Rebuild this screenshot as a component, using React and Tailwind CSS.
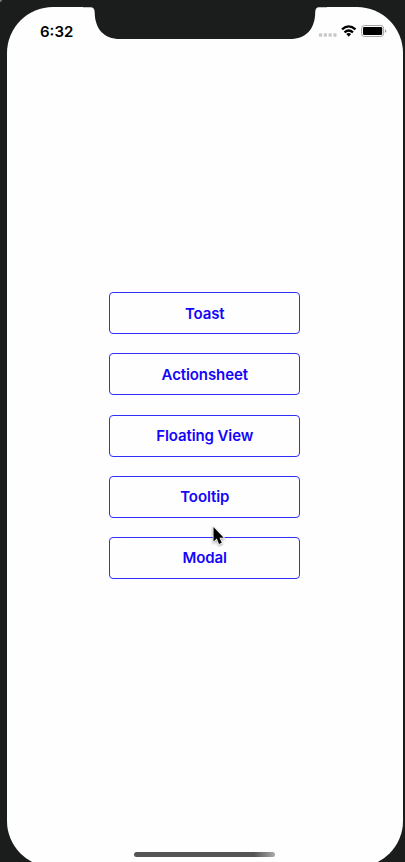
const actions = ["Toast", "Actionsheet", "Floating View", "Tooltip", "Modal"];

function Notch() {
  return (
    <svg className="absolute left-[76px] top-0 h-[33px] w-[244px]" viewBox="83 7 244 33" fill="#1b1d1c" aria-hidden="true">
      <path d="M83 7V7.3H90.5Q94.7 7.4 94.7 12.5C95 29 104 39 120 39H290C306 39 315 29 315.2 12.5Q315.2 7.4 319 7.3H327V7Z" />
    </svg>
  );
}

function StatusIcons() {
  return (
    <svg className="h-[16px] w-[70px]" viewBox="318 23 70 16" aria-hidden="true">
      <g fill="#c9c9c9">
        <rect x="318.9" y="33.3" width="3.3" height="3.5" rx=".8" />
        <rect x="323.7" y="33.3" width="3.3" height="3.5" rx=".8" />
        <rect x="328.5" y="33.3" width="3.3" height="3.5" rx=".8" />
        <rect x="333.3" y="33.3" width="3.3" height="3.5" rx=".8" />
      </g>
      <g fill="none" stroke="#000" strokeWidth="2.2">
        <path d="M342 29.4Q348.7 23.2 355.5 29.4" />
        <path d="M344.5 32.4Q348.7 28.6 353 32.4" />
      </g>
      <path d="M346.3 34Q348.7 32 351.1 34L348.7 36.7Z" />
      <rect x="361.6" y="25.5" width="22" height="11" rx="2.8" fill="#fff" stroke="#a3a3a3" />
      <rect x="363" y="27" width="19.2" height="8" rx="1.2" />
      <path d="M385 29.2Q386.3 29.6 386.3 31Q386.3 32.4 385 32.8Z" fill="#999" />
    </svg>
  );
}

export default function App() {
  return (
    <div className="relative h-[862px] w-[405px] overflow-hidden bg-[#1b1d1c] pl-[7px] pt-[7px] font-['Inter','Liberation_Sans',sans-serif]">
      <div className="absolute left-0 top-0 size-[2px] rounded-br-full bg-[#777]" />
      <main className="relative flex h-[860px] w-[395.5px] flex-col items-center rounded-[46px] bg-[#fefefe]">
        <Notch />
        <header className="flex h-[33px] w-full shrink-0 items-start justify-between pl-[33px] pr-[14.5px] pt-[16px]">
          <time className="text-[15px] font-semibold leading-[17px] text-black">6:32</time>
          <StatusIcons />
        </header>
        <nav className="mt-[252.2px] flex w-[191px] flex-col gap-[19.2px]">
          {actions.map((label) => (
            <button key={label} className="flex h-[42px] items-center justify-center rounded-[4px] border border-[#3030f8] pt-[0.7px] text-[15px] font-semibold leading-5 tracking-[-0.1px] text-[#1405fa]">
              {label}
            </button>
          ))}
        </nav>
        <div className="absolute left-[127px] top-[844.6px] h-[5px] w-[141px] rounded-full bg-linear-to-r from-[#555] from-85% to-[#aaa]" />
      </main>
      <svg className="absolute left-[208px] top-[522px] h-[26px] w-[20px] drop-shadow-[0_1px_1px_rgba(0,0,0,0.4)]" viewBox="208 522 20 26" aria-hidden="true">
        <path d="M213.5 527V541.5L216.8 538.5L219 544L221.8 542.8L219.5 537.7H223.7Z" fill="#000" stroke="#fff" strokeWidth="1.6" paintOrder="stroke" />
      </svg>
    </div>
  );
}
